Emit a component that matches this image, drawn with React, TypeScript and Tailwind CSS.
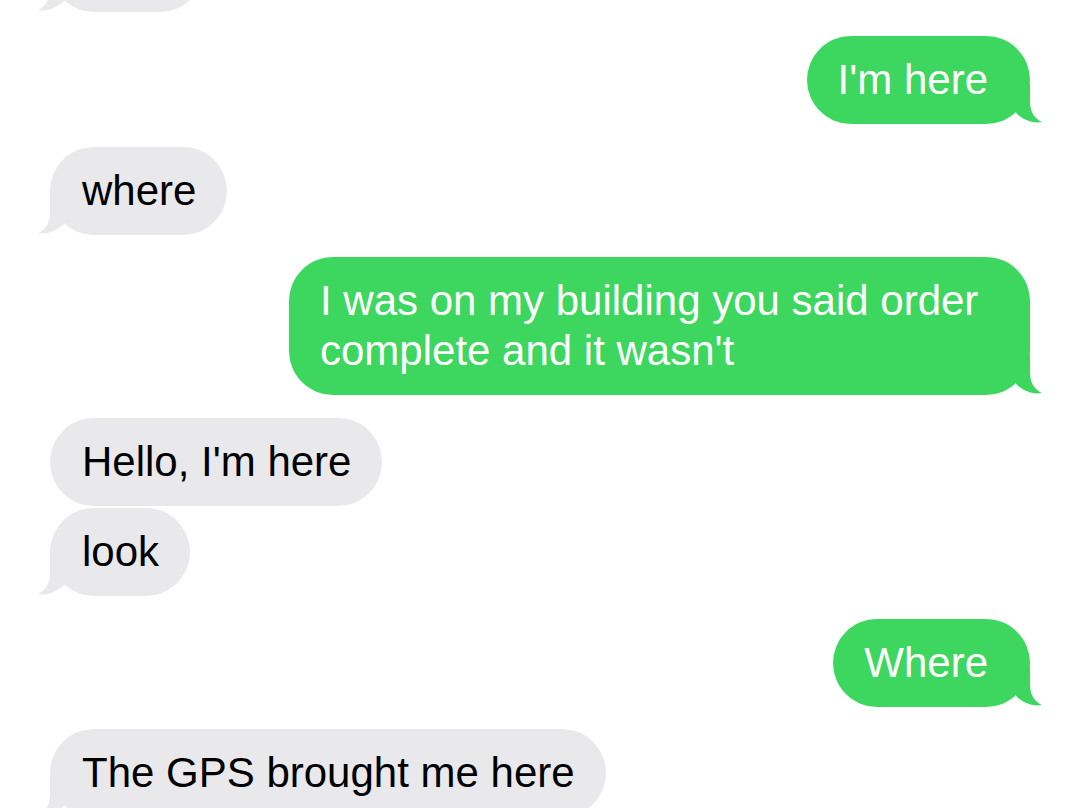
type Msg = { from: "me" | "them"; text: string; tail?: boolean; gap: string };

const messages: Msg[] = [
  { from: "me", text: "I'm here", tail: true, gap: "mt-[24px]" },
  { from: "them", text: "where", tail: true, gap: "mt-[23px]" },
  { from: "me", text: "I was on my building you said order complete and it wasn't", tail: true, gap: "mt-[22px]" },
  { from: "them", text: "Hello, I'm here", gap: "mt-[23px]" },
  { from: "them", text: "look", tail: true, gap: "mt-[2px]" },
  { from: "me", text: "Where", tail: true, gap: "mt-[23px]" },
  { from: "them", text: "The GPS brought me here", tail: true, gap: "mt-[22px]" },
];

function Tail({ side }: { side: "left" | "right" }) {
  const color = side === "left" ? "#e9e9eb" : "#3dd75f";
  return (
    <svg
      width="34"
      height="40"
      viewBox="0 0 34 40"
      className={
        side === "left"
          ? "absolute bottom-0 left-[-14px]"
          : "absolute bottom-0 right-[-14px] -scale-x-100"
      }
    >
      <path
        d="M14 0 L14 18 C14 28 9 35 2 38 C10 39.5 19 37 27 30 L32 22 L32 0 Z"
        fill={color}
      />
    </svg>
  );
}

function Bubble({ msg }: { msg: Msg }) {
  const mine = msg.from === "me";
  return (
    <div className={mine ? "flex justify-end" : "flex justify-start"}>
      <div
        className={
          mine
            ? "relative max-w-[741px] rounded-[44px] bg-[#3dd75f] py-[19px] pl-[31px] pr-[42px] text-white"
            : "relative max-w-[741px] rounded-[44px] bg-[#e9e9eb] py-[19px] pl-[32px] pr-[31px] text-black"
        }
      >
        <p className="text-[42px] leading-[50px]">{msg.text}</p>
        {msg.tail && <Tail side={mine ? "right" : "left"} />}
      </div>
    </div>
  );
}

export default function App() {
  return (
    <div
      className="h-[808px] overflow-hidden bg-white px-[50px]"
      style={{ fontFamily: '"Liberation Sans", Arial, sans-serif' }}
    >
      <div className="flex flex-col">
        <div className="mt-[-76px] flex justify-start">
          <div className="relative h-[88px] w-[154px] rounded-[44px] bg-[#e9e9eb]">
            <Tail side="left" />
          </div>
        </div>
        {messages.map((m, i) => (
          <div key={i} className={m.gap}>
            <Bubble msg={m} />
          </div>
        ))}
      </div>
    </div>
  );
}
